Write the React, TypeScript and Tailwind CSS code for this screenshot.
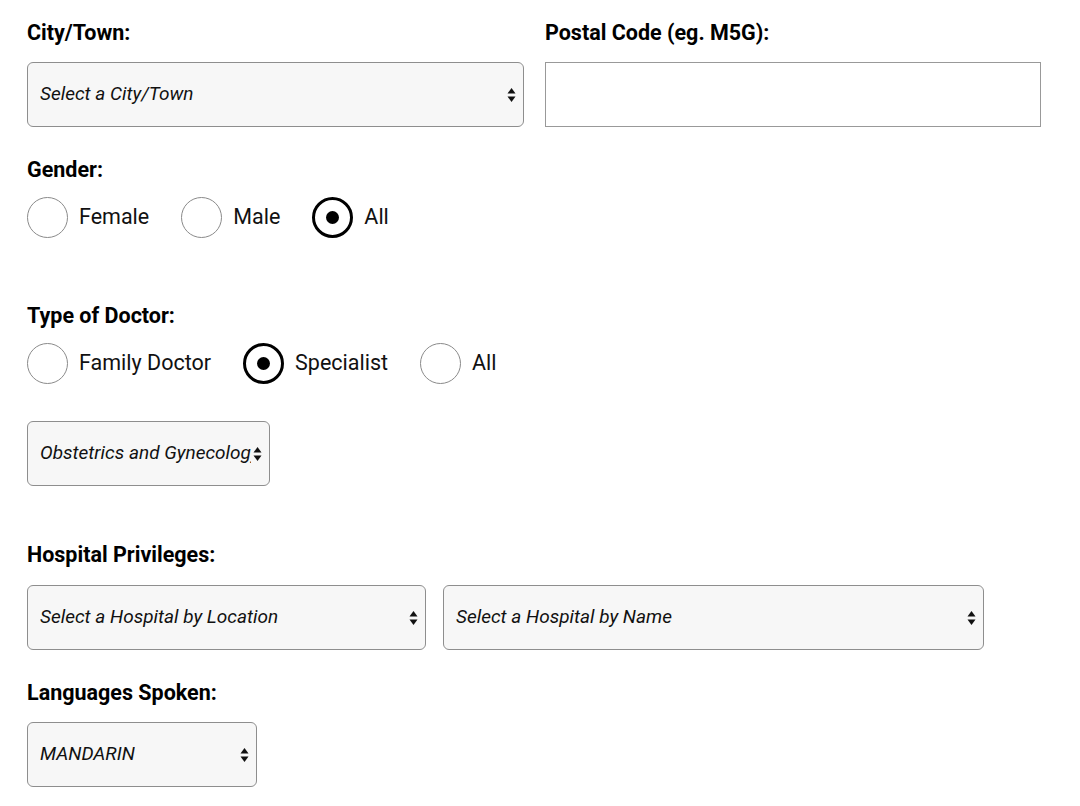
import React from "react";

const font = { fontFamily: "Roboto, 'Liberation Sans', sans-serif" };

function Arrows() {
  return (
    <svg width="9" height="16" viewBox="0 0 9 16" className="shrink-0">
      <path d="M4.5 1 L8.5 6.6 L0.5 6.6 Z" fill="#111" />
      <path d="M4.5 15 L8.5 9.4 L0.5 9.4 Z" fill="#111" />
    </svg>
  );
}

function FakeSelect({ text, className }: { text: string; className: string }) {
  return (
    <div
      className={`h-[65px] flex items-center justify-between rounded-[6px] border border-[#8e8e8e] bg-[#f7f7f7] pl-[12px] pr-[7px] ${className}`}
    >
      <span className="italic text-[19px] text-[#111] whitespace-nowrap overflow-hidden mr-[2px]">
        {text}
      </span>
      <Arrows />
    </div>
  );
}

function Radio({ label, checked }: { label: string; checked?: boolean }) {
  return (
    <div className="flex items-center gap-[11px]">
      {checked ? (
        <div className="w-[41px] h-[41px] rounded-full border-[3px] border-black flex items-center justify-center">
          <div className="w-[13px] h-[13px] rounded-full bg-black" />
        </div>
      ) : (
        <div className="w-[41px] h-[41px] rounded-full border-[1.5px] border-[#8a8a8a] bg-white" />
      )}
      <span className="text-[21.5px] text-[#111]">{label}</span>
    </div>
  );
}

function Label({ children }: { children: React.ReactNode }) {
  return <div className="h-[24px] leading-[24px] text-[21.5px] font-bold text-black">{children}</div>;
}

export default function App() {
  return (
    <div style={font} className="w-[1080px] h-[806px] bg-white pl-[27px] pt-[21px] overflow-hidden">
      {/* City / Postal */}
      <div className="flex gap-[21px]">
        <div className="w-[497px]">
          <Label>City/Town:</Label>
          <FakeSelect text="Select a City/Town" className="mt-[17px] w-[497px]" />
        </div>
        <div className="w-[496px]">
          <Label>Postal Code (eg. M5G):</Label>
          <div className="mt-[17px] h-[65px] border border-[#999] bg-white" />
        </div>
      </div>

      {/* Gender */}
      <div className="mt-[31px]">
        <Label>Gender:</Label>
        <div className="mt-[15px] flex items-center gap-[32px]">
          <Radio label="Female" />
          <Radio label="Male" />
          <Radio label="All" checked />
        </div>
      </div>

      {/* Type of Doctor */}
      <div className="mt-[66px]">
        <Label>Type of Doctor:</Label>
        <div className="mt-[15px] flex items-center gap-[32px]">
          <Radio label="Family Doctor" />
          <Radio label="Specialist" checked />
          <Radio label="All" />
        </div>
        <FakeSelect text="Obstetrics and Gynecology" className="mt-[37px] w-[243px]" />
      </div>

      {/* Hospital */}
      <div className="mt-[57px]">
        <Label>Hospital Privileges:</Label>
        <div className="mt-[18px] flex gap-[17px]">
          <FakeSelect text="Select a Hospital by Location" className="w-[399px]" />
          <FakeSelect text="Select a Hospital by Name" className="w-[541px]" />
        </div>
      </div>

      {/* Languages */}
      <div className="mt-[31px]">
        <Label>Languages Spoken:</Label>
        <FakeSelect text="MANDARIN" className="mt-[17px] w-[230px]" />
      </div>
    </div>
  );
}
